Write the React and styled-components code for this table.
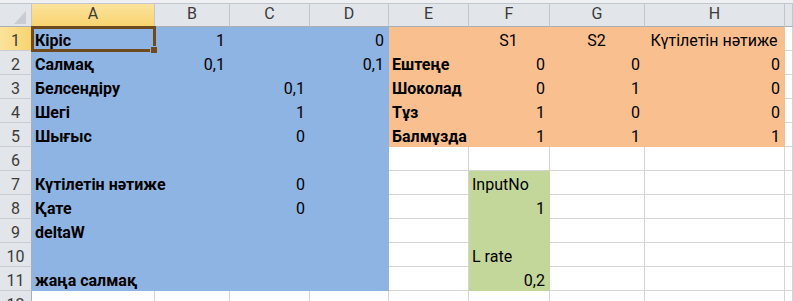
import React from 'react';
import styled, { createGlobalStyle } from 'styled-components';

const GlobalStyle = createGlobalStyle`
  html, body {
    margin: 0;
    padding: 0;
    background: #ffffff;
    overflow: hidden;
  }
  body {
    font-family: Roboto, "Noto Sans", "DejaVu Sans", sans-serif;
  }
`;

const GRID = '#D4D4D4';
const FILL = {
  blue: '#8DB4E2',
  orange: '#FABF8F',
  green: '#C4D79B',
};

const COLUMNS = [
  { key: 'A', width: 123 },
  { key: 'B', width: 75 },
  { key: 'C', width: 80 },
  { key: 'D', width: 79 },
  { key: 'E', width: 80 },
  { key: 'F', width: 81 },
  { key: 'G', width: 95 },
  { key: 'H', width: 140 },
];

const label = (text) => ({ text, bold: true, align: 'left' });
const num = (text) => ({ text, align: 'right' });
const head = (text) => ({ text, align: 'center' });
const plain = (text) => ({ text, align: 'left' });

const ROWS = [
  { A: label('Кіріс'), B: num('1'), D: num('0'), F: head('S1'), G: head('S2'), H: head('Күтілетін нәтиже') },
  { A: label('Салмақ'), B: num('0,1'), D: num('0,1'), E: label('Ештеңе'), F: num('0'), G: num('0'), H: num('0') },
  { A: label('Белсендіру'), C: num('0,1'), E: label('Шоколад'), F: num('0'), G: num('1'), H: num('0') },
  { A: label('Шегі'), C: num('1'), E: label('Тұз'), F: num('1'), G: num('0'), H: num('0') },
  { A: label('Шығыс'), C: num('0'), E: label('Балмұзда'), F: num('1'), G: num('1'), H: num('1') },
  {},
  { A: label('Күтілетін нәтиже'), C: num('0'), F: plain('InputNo') },
  { A: label('Қате'), C: num('0'), F: num('1') },
  { A: label('deltaW') },
  { F: plain('L rate') },
  { A: label('жаңа салмақ'), F: num('0,2') },
  {},
];

// Fill ranges: A1:D11 blue, E1:H5 orange, F7:F11 green
const fillFor = (row, col) => {
  if (col <= 3 && row <= 11) return 'blue';
  if (col >= 4 && col <= 7 && row <= 5) return 'orange';
  if (col === 5 && row >= 7 && row <= 11) return 'green';
  return null;
};

const Window = styled.div`
  width: 793px;
  height: 301px;
  overflow: hidden;
  display: flex;
  flex-direction: column;
  background: #ffffff;
`;

const TopStrip = styled.div`
  height: 3px;
  flex: none;
  background: #eef0f3;
  border-bottom: 1px solid #c2c6cc;
`;

const Sheet = styled.div`
  display: grid;
  /* last track is the sliver of the next column at the window edge */
  grid-template-columns: 32px ${COLUMNS.map((c) => `${c.width}px`).join(' ')} 1fr;
  grid-template-rows: 23px;
  grid-auto-rows: 24px;
  font-size: 16px;
`;

const Corner = styled.div`
  position: relative;
  background: #e2e5ea;
  border-right: 1px solid #c3c7cd;
  border-bottom: 1px solid #a9aeb5;

  &::after {
    content: '';
    position: absolute;
    right: 5px;
    bottom: 2px;
    width: 12px;
    height: 13px;
    background: #c9ccd1;
    clip-path: polygon(100% 0, 100% 100%, 0 100%);
  }
`;

const ColHeader = styled.div`
  display: flex;
  align-items: center;
  justify-content: center;
  padding-bottom: 2px;
  background: ${(p) => (p.$active ? 'linear-gradient(#fce39d, #f8d46f)' : '#e2e5ea')};
  border-right: 1px solid #c3c7cd;
  border-bottom: 1px solid ${(p) => (p.$active ? '#e2a944' : '#a9aeb5')};
  color: #3b3b3b;
  line-height: 18px;
`;

const RowHeader = styled.div`
  display: flex;
  align-items: flex-end;
  justify-content: center;
  background: ${(p) => (p.$active ? 'linear-gradient(90deg, #fce39d, #f8d46f)' : '#e2e5ea')};
  border-right: 1px solid ${(p) => (p.$active ? '#e2a944' : '#a9aeb5')};
  border-bottom: 1px solid #c9cdd2;
  color: #3b3b3b;
  line-height: 18px;
`;

const justify = { left: 'flex-start', right: 'flex-end', center: 'center' };

const Cell = styled.div`
  position: relative;
  z-index: ${(p) => p.$layer};
  display: flex;
  align-items: flex-end;
  justify-content: ${(p) => justify[p.$align] || 'flex-start'};
  padding: 0 4px 0 3px;
  min-width: 0;
  background: ${(p) => (p.$fill ? FILL[p.$fill] : '#ffffff')};
  border-right: 1px solid ${(p) => (p.$fill ? FILL[p.$fill] : GRID)};
  border-bottom: 1px solid ${(p) => (p.$fill ? FILL[p.$fill] : GRID)};
  color: #000000;
  font-weight: ${(p) => (p.$bold ? 700 : 400)};
  line-height: 18px;
  white-space: nowrap;
`;

const Selection = styled.div`
  position: absolute;
  left: -1px;
  top: -1px;
  width: 125px;
  height: 26px;
  box-sizing: border-box;
  border: 3px solid #6f4a1d;
  pointer-events: none;
`;

const FillHandle = styled.div`
  position: absolute;
  right: -4px;
  bottom: -4px;
  width: 6px;
  height: 6px;
  background: #6f4a1d;
  box-shadow: 0 0 0 1px ${FILL.blue};
`;

export default function App() {
  return (
    <>
      <GlobalStyle />
      <Window>
        <TopStrip />
        <Sheet>
          <Corner />
          {COLUMNS.map((c) => (
            <ColHeader key={c.key} $active={c.key === 'A'}>
              {c.key}
            </ColHeader>
          ))}
          <ColHeader />

          {ROWS.map((row, ri) => {
            const n = ri + 1;
            return (
              <React.Fragment key={n}>
                <RowHeader $active={n === 1}>{n}</RowHeader>
                {COLUMNS.map((c, ci) => {
                  const cell = row[c.key];
                  const selected = n === 1 && c.key === 'A';
                  return (
                    <Cell
                      key={c.key}
                      $fill={fillFor(n, ci)}
                      $align={cell?.align}
                      $bold={cell?.bold}
                      $layer={selected ? 2 : cell ? 1 : 'auto'}
                    >
                      {cell?.text}
                      {selected && (
                        <Selection>
                          <FillHandle />
                        </Selection>
                      )}
                    </Cell>
                  );
                })}
                <Cell $layer="auto" />
              </React.Fragment>
            );
          })}
        </Sheet>
      </Window>
    </>
  );
}
